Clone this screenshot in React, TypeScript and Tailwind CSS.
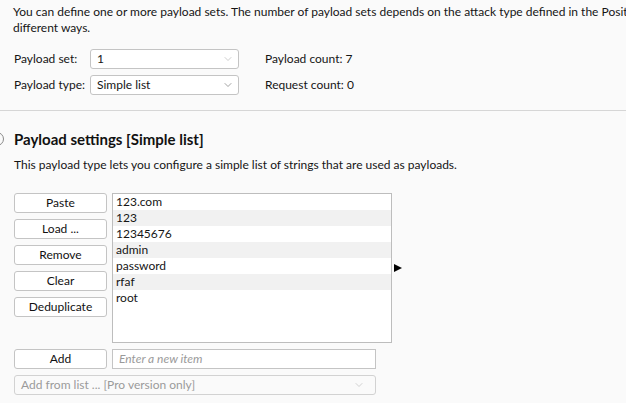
import { ChevronDown } from "lucide-react"

const items = ["123.com", "123", "12345676", "admin", "password", "rfaf", "root"]
const actions = ["Paste", "Load ...", "Remove", "Clear", "Deduplicate"]

function Select({ value, dark }: { value: string; dark?: boolean }) {
  return (
    <div className="w-[149px] h-[20px] flex items-center justify-between bg-white border border-[#c4c4c4] rounded-[3px] pl-[6px] pr-[4px]">
      <span>{value}</span>
      <ChevronDown className={"w-[12px] h-[12px] " + (dark ? "text-[#6a6a6a]" : "text-[#b0b0b0]")} strokeWidth={1.25} />
    </div>
  )
}

function Btn({ label }: { label: string }) {
  return (
    <button className="w-[93px] h-[20px] bg-white border border-[#c4c4c4] rounded-[3px] text-center text-[#111]">
      {label}
    </button>
  )
}

export default function App() {
  return (
    <div className="w-[626px] h-[403px] overflow-hidden bg-[#fafafa] text-[12px] text-[#151515] font-['Lato',sans-serif] leading-[16px]">
      <div className="px-[13px] pt-[4px] whitespace-nowrap overflow-hidden">
        <p>You can define one or more payload sets. The number of payload sets depends on the attack type defined in the Positions tab. Various payload types are available for each payload set, and each payload type can be customized in</p>
        <p>different ways.</p>
      </div>

      <div className="grid grid-cols-[76px_149px_26px_auto] gap-y-[6px] items-center pl-[14px] mt-[13px]">
        <span>Payload set:</span>
        <Select value="1" />
        <span />
        <span>Payload count: 7</span>
        <span>Payload type:</span>
        <Select value="Simple list" dark />
        <span />
        <span>Request count: 0</span>
      </div>

      <div className="mt-[15px] border-t border-[#d6d6d6]" />

      <div className="flex items-center h-[20px] mt-[18px] relative">
        <span className="absolute left-[-10px] w-[14px] h-[14px] rounded-full border-[1.5px] border-[#8a8a8a]" />
        <h2 className="pl-[14px] text-[15px] font-bold text-[#111]">Payload settings [Simple list]</h2>
      </div>
      <p className="pl-[14px] mt-[8px]">This payload type lets you configure a simple list of strings that are used as payloads.</p>

      <div className="flex pl-[14px] mt-[20px]">
        <div className="flex flex-col gap-[6px]">
          {actions.map((a) => (
            <Btn key={a} label={a} />
          ))}
        </div>
        <div className="ml-[5px] w-[280px] h-[150px] bg-white border border-[#bdbdbd]">
          {items.map((it, i) => (
            <div key={it} className={"h-[16px] pl-[3px] leading-[16px] " + (i % 2 === 1 ? "bg-[#f1f1f1]" : "")}>
              {it}
            </div>
          ))}
        </div>
        <div className="ml-[2px] mt-[71px] w-0 h-0 border-y-[4.5px] border-y-transparent border-l-[8px] border-l-black" />
      </div>

      <div className="flex pl-[14px] mt-[6px] gap-[5px]">
        <Btn label="Add" />
        <div className="w-[264px] h-[20px] bg-white border border-[#c4c4c4] pl-[6px] flex items-center italic text-[#9a9a9a]">
          Enter a new item
        </div>
      </div>

      <div className="ml-[14px] mt-[6px] w-[362px] h-[20px] flex items-center justify-between border border-[#d2d2d2] rounded-[3px] pl-[6px] pr-[10px] text-[#9a9a9a]">
        <span>Add from list ... [Pro version only]</span>
        <ChevronDown className="w-[12px] h-[12px] text-[#b8b8b8]" strokeWidth={1.25} />
      </div>
    </div>
  )
}
